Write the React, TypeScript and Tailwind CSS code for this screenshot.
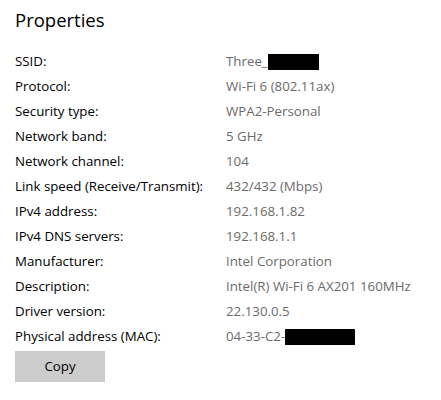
const rows: { label: string; value: string; redact?: string }[] = [
  { label: "SSID:", value: "Three_", redact: "w-[51px]" },
  { label: "Protocol:", value: "Wi-Fi 6 (802.11ax)" },
  { label: "Security type:", value: "WPA2-Personal" },
  { label: "Network band:", value: "5 GHz" },
  { label: "Network channel:", value: "104" },
  { label: "Link speed (Receive/Transmit):", value: "432/432 (Mbps)" },
  { label: "IPv4 address:", value: "192.168.1.82" },
  { label: "IPv4 DNS servers:", value: "192.168.1.1" },
  { label: "Manufacturer:", value: "Intel Corporation" },
  { label: "Description:", value: "Intel(R) Wi-Fi 6 AX201 160MHz" },
  { label: "Driver version:", value: "22.130.0.5" },
  { label: "Physical address (MAC):", value: "04-33-C2-", redact: "w-[70px]" },
];

export default function App() {
  return (
    <div
      className="w-[441px] h-[400px] bg-white px-[15px] pt-[6px] text-black"
      style={{ fontFamily: '"Open Sans", "Noto Sans", sans-serif' }}
    >
      <h1 className="text-[18.5px] leading-[28px] h-[43px]">Properties</h1>
      <div className="flex flex-col">
        {rows.map((r) => (
          <div key={r.label} className="flex items-center h-[25px] text-[13.3px]">
            <div className="w-[211px] shrink-0">{r.label}</div>
            <div className="flex items-center text-[#6b6b6b]">
              <span>{r.value}</span>
              {r.redact && <span className={`${r.redact} h-[16px] bg-black`} />}
            </div>
          </div>
        ))}
      </div>
      <button className="mt-[2px] w-[90px] h-[31px] bg-[#cccccc] text-[13.3px]">Copy</button>
    </div>
  );
}
